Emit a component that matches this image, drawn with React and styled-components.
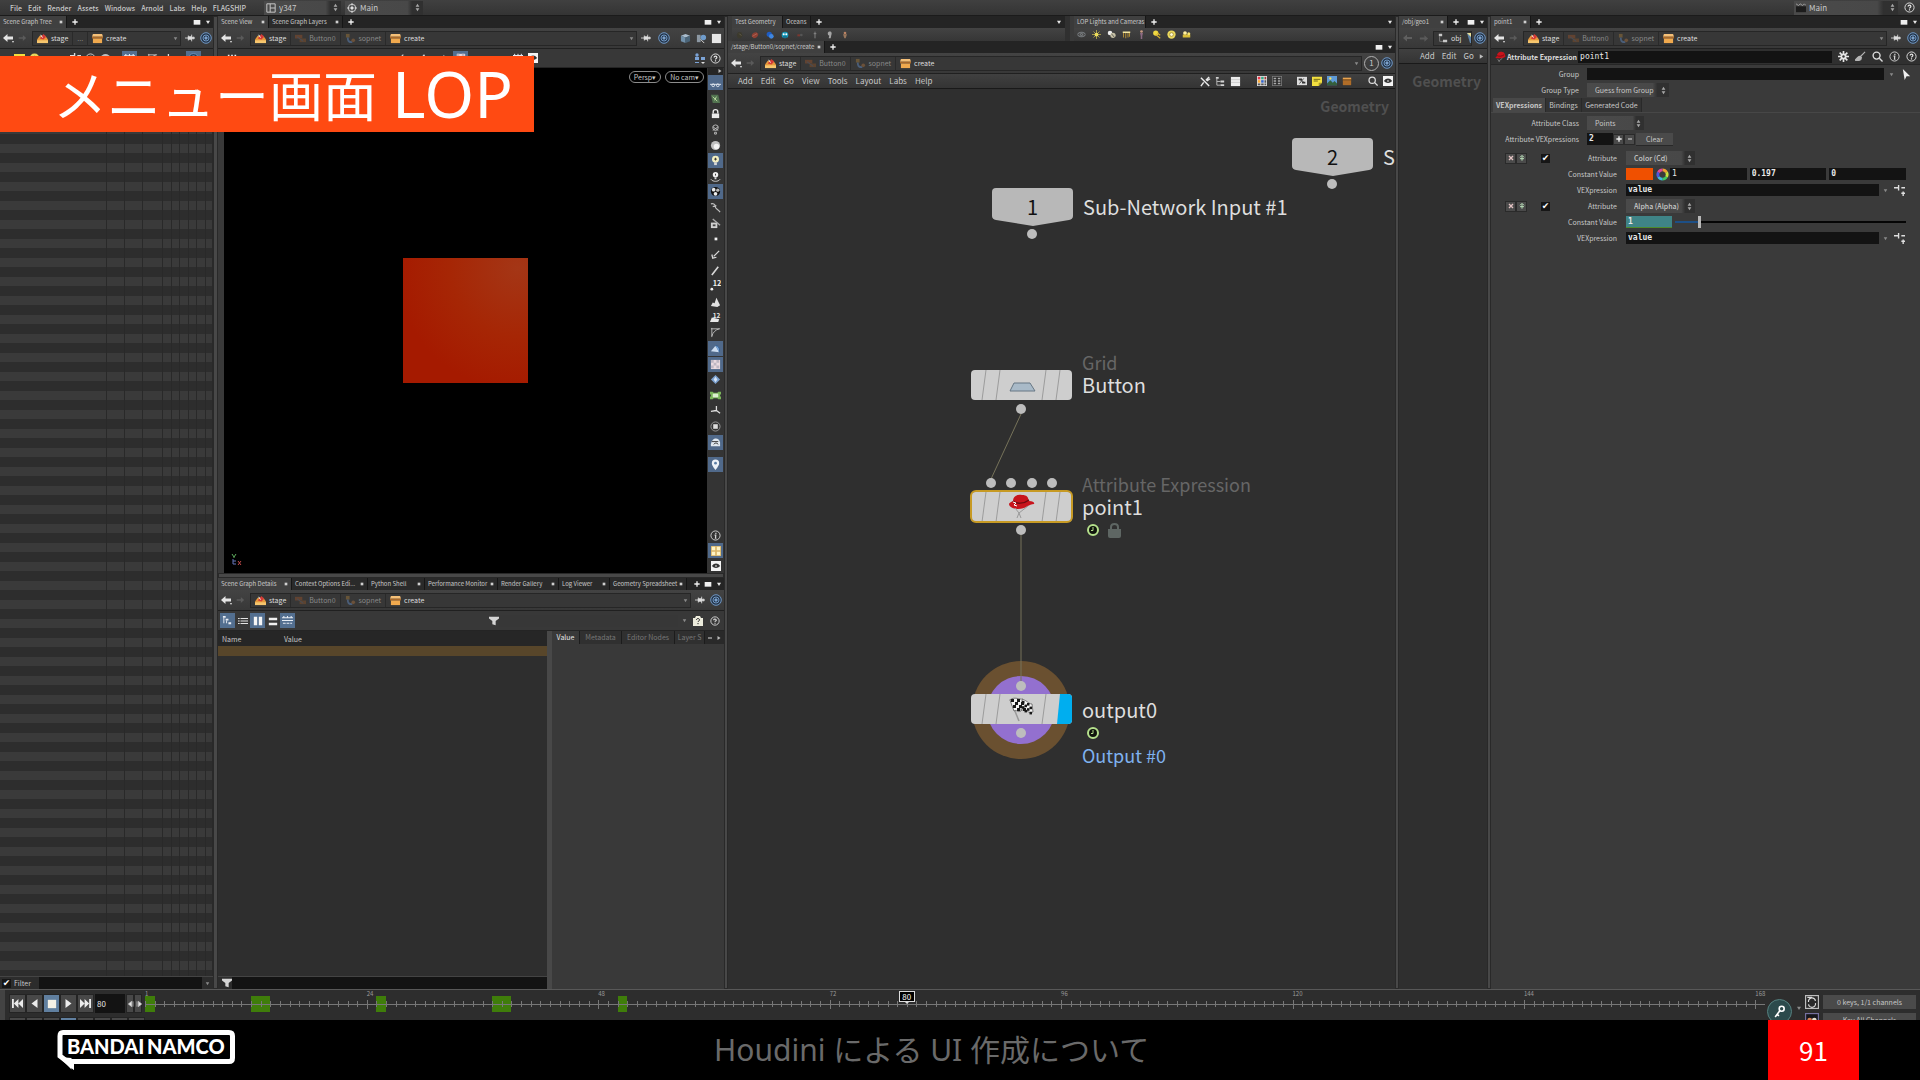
import React, { useState } from 'react'
import styled, { createGlobalStyle, css } from 'styled-components'

const UI = '"Noto Sans CJK JP", "Noto Sans", sans-serif'
const MONO = '"DejaVu Sans Mono", "Liberation Mono", monospace'

const ICONS = {
    back: <path d="M1 6 5.500 2v2.500H11v3H5.500V10zM10 9l2 0-1 2z" fill="#e4e4e4" />,
    forward: <path d="M11 6 7 2.500V5H2v2h5v2.500z" fill="#5a5a5a" />,
    backDim: <path d="M1 6 5 2.500V5h5v2H5v2.500z" fill="#5f5f5f" />,
    plus: <path d="M5 2h2v3h3v2H7v3H5V7H2V5h3z" fill="#f0f0f0" />,
    minus: <path d="M2 5h8v2H2z" fill="#dcdcdc" />,
    close: <path d="M4 4h4v4H4z" fill="#cfcfcf" />,
    cross: <path d="M3 3l6 6M9 3l-6 6" stroke="#e3c3c3" strokeWidth="2" />,
    insert: <path d="M3 5l3-3 3 3M6 3v7M3 7h6" stroke="#b9dfb9" strokeWidth="1.500" fill="none" />,
    pane: <path d="M1 3h10v7H1z" fill="#f0f0f0" />,
    down: <path d="M3 4h6L6 9z" fill="#e8e8e8" />,
    downDim: <path d="M3 4h6L6 9z" fill="#8a8a8a" />,
    right: <path d="M3 2l6 4-6 4z" fill="#bdbdbd" />,
    updown: <path d="M3.500 5 6 1l2.500 4zM3.500 7 6 11l2.500-4z" fill="#a8a8a8" />,
    stage: <g><path d="M0 7l3-4h6l3 4v4H0z" fill="#e79a3c" /><path d="M0 8h12v3H0z" fill="#f6c66e" /><path d="M3 6l4-5 3 3-3 3z" fill="#d33a36" /><path d="M4 2l2 3" stroke="#fff" /></g>,
    buttonNet: <g opacity="0.5"><path d="M0 2h8v4H0z" fill="#8d4f2c" /><path d="M5 6h7v4H5z" fill="#81502b" /><path d="M2 4l7 5" stroke="#4f6482" /></g>,
    sopnet: <g opacity="0.6"><path d="M1 1h4v4H1z" fill="#8a6a3a" /><path d="M3 5c0 4 1 5 5 5" stroke="#5778a5" strokeWidth="2" fill="none" /><circle cx="9" cy="8" r="2" fill="#8f633c" /></g>,
    create: <g><path d="M1 1h10l1 3H0z" fill="#f5c078" /><path d="M0 4h12v2H0z" fill="#a9692a" /><path d="M1 6h10v5H1z" fill="#f0a94e" /></g>,
    objnet: <g><path d="M1 1h4v3H1zM6 8h5v3H6z" fill="#c8c8c8" /><path d="M2 4v6h4" stroke="#888" fill="none" /></g>,
    objTool: <g><path d="M1 1h5l4 10H4z" fill="#5c82a8" /><path d="M1 1h4l2 6z" fill="#e8dd94" /></g>,
    pin: <path d="M0 6h4M4 3v6M4 4.500h4v3H4zM8 2v8M9 5h2v2H9z" stroke="#dedede" fill="#dedede" />,
    target: <g fill="none" stroke="#6f96c2"><circle cx="6" cy="6" r="5.300" fill="#26374c" /><circle cx="6" cy="6" r="3" /><circle cx="6" cy="6" r="1.200" fill="#9dbbe0" /></g>,
    help: <g fill="none" stroke="#e6e6e6"><circle cx="6" cy="6" r="5" /><path d="M4.500 5c0-2 3-2 3 0 0 1-1.500 1-1.500 2M6 8v1.200" strokeWidth="1.300" /></g>,
    info: <g fill="none" stroke="#d6d6d6"><circle cx="6" cy="6" r="5" /><path d="M5 5.500h1.300L6 9h1M6.400 3v1.300" strokeWidth="1.300" /></g>,
    cube: <g><path d="M1 3l5-2 5 2-5 2z" fill="#a9bccd" /><path d="M1 3l5 2v6L1 9z" fill="#7190aa" /><path d="M11 3L6 5v6l5-2z" fill="#4a6478" /></g>,
    capture: <g><path d="M1 2h4v8H1z" fill="#8c98a3" /><circle cx="8" cy="5" r="3" fill="#6f9ccc" /><path d="M5 7l4 4" stroke="#ddd" /></g>,
    square: <path d="M1 1h10v10H1z" fill="#e6e6e6" />,
    people: <g fill="#7ba3d6"><circle cx="3" cy="3" r="1.700" /><path d="M1 5h4v3H1zM1 10h4v1H1zM7 5h4v3H7z" /><path d="M7 10h4l-2 2z" fill="#ddd" /></g>,
    grid: <g fill="#eee"><path d="M1 2h2v2H1zM5 2h2v2H5zM9 2h2v2H9zM1 6h2v2H1zM5 6h2v2H5zM9 6h2v2H9z" /></g>,
    lamp: <g><circle cx="6" cy="6" r="2.500" fill="#f8eb78" /><path d="M6 0v12M0 6h12M2 2l8 8M10 2l-8 8" stroke="#e8d64f" strokeWidth="0.800" /></g>,
    lampArea: <g><path d="M1 2h10v2H1z" fill="#f4e6a0" /><path d="M2 4v6M5 4v7M8 4v6M10 4v5" stroke="#d6a634" /></g>,
    lampPoint: <g><circle cx="4" cy="4" r="3" fill="#eee" /><circle cx="8" cy="7" r="3.500" fill="#c5c0a4" /><path d="M6 5l4 5" stroke="#444" /></g>,
    spot: <g><circle cx="5" cy="4" r="3.500" fill="#f0d942" /><path d="M5 6l6 5M7 4l4 3" stroke="#dcb52f" strokeWidth="1.500" /></g>,
    ring: <g><circle cx="6" cy="6" r="5.500" fill="#ead85c" /><circle cx="6" cy="6" r="2.500" fill="#fffbd8" stroke="#9a8330" /></g>,
    mover: <g><circle cx="4" cy="4" r="2.500" fill="#fff0a0" /><path d="M1 6h10v4H1z" fill="#d9bd37" /><circle cx="9" cy="5" r="2" fill="#f7e46f" /></g>,
    figure: <g><circle cx="6" cy="2" r="1.800" fill="#c99b83" /><path d="M4 4h4l-1 4v4H5V8z" fill="#8c6a82" /></g>,
    eyeShadow: <g fill="none" stroke="#8e9499"><path d="M0 6c3-4 9-4 12 0-3 4-9 4-12 0z" fill="#4b4b4b" /><circle cx="6" cy="6" r="1.500" /></g>,
    crag: <g><path d="M3 2h5l2 5-3 4H3L1 6z" fill="#3c3a2d" /><path d="M5 4l3 3" stroke="#77705b" /></g>,
    bolt: <g><path d="M1 8c0-4 3-6 7-6l3 2c0 4-3 7-7 7z" fill="#8d4033" /><path d="M2 8l7-4" stroke="#c0705f" /></g>,
    pig: <g><circle cx="5" cy="5" r="4" fill="#1e5cc4" /><circle cx="8" cy="8" r="3.500" fill="#3f86e0" /></g>,
    squab: <g><circle cx="6" cy="6" r="5" fill="#1798b8" /><circle cx="4" cy="5" r="1.500" fill="#fff" /><circle cx="8" cy="5" r="1.500" fill="#fff" /><path d="M3 9h6" stroke="#0c3350" /></g>,
    toy: <g><path d="M2 5h4v3H2z" fill="#7a3830" /><circle cx="8" cy="6" r="2" fill="#555" /></g>,
    mannequin: <path d="M6 1v10M4 4h4" stroke="#8b8b8b" strokeWidth="1.300" />,
    head: <path d="M4 1c5-1 5 3 4 5l-1 5H4l1-4c-3-1-3-5-1-6z" fill="#a5a5a5" />,
    tommy: <g><circle cx="6" cy="3" r="2" fill="#b98263" /><path d="M3 5h6l-2 6H5z" fill="#97765c" /></g>,
    tools: <path d="M1 2l9 9M10 1 7 4l1 1 3-2M4 7l-3 4" stroke="#e8e8e8" strokeWidth="1.600" fill="none" />,
    tree: <g fill="#d4d4d4"><path d="M1 1h3v2H1zM6 5h4v2H6zM6 9h4v2H6z" /><path d="M2 3v7h4M2 6h4" stroke="#bdbdbd" fill="none" /></g>,
    list: <g><path d="M1 1h10v10H1z" fill="#ededed" /><path d="M1 4h10M1 7h10" stroke="#b3b3b3" strokeWidth="0.600" /></g>,
    palette: <g><path d="M0 0h12v12H0z" fill="#ddd" /><path d="M1 1h3v3H1z" fill="#e34" /><path d="M5 1h3v3H5z" fill="#3a8" /><path d="M1 5h3v3H1z" fill="#fa3" /><path d="M9 1h2v3H9z" fill="#a33" /><path d="M5 5h3v3H5z" fill="#36c" /><path d="M1 9h3v2H1zM5 9h3v2H5zM9 5h2v3H9zM9 9h2v2H9z" fill="#555" /></g>,
    dots: <g><path d="M0 0h12v12H0z" fill="#777" /><path d="M1 1h10v10H1z" fill="#2a2a2a" /><path d="M2 2h3v2H2zM7 2h3v2H7zM2 5h3v2H2zM7 5h3v2H7zM2 8h3v2H2zM7 8h3v2H7z" fill="#aaa" /></g>,
    netbox: <g><path d="M0 1h12v10H0z" fill="#ddd" /><path d="M2 3h4v2H2zM6 7h4v2H6z" fill="#333" /><path d="M4 5l4 2M8 3l-5 6" stroke="#333" /></g>,
    note: <g><path d="M0 1h12v7l-4 4H0z" fill="#f2df3f" /><path d="M2 4h8M2 6h5" stroke="#5e5414" /><path d="M8 12V8h4z" fill="#a4942a" /></g>,
    image: <g><path d="M0 0h12v11H0z" fill="#5e9ad6" /><path d="M0 9l4-4 3 3 2-2 3 3v2H0z" fill="#345f3c" /><circle cx="4" cy="3" r="1.400" fill="#f4e25f" /></g>,
    box: <g><path d="M1 2h10v3H1z" fill="#e9a450" /><path d="M1 5h10v6H1z" fill="#b06d28" /><path d="M0 4h12v1H0z" fill="#6b4113" /></g>,
    search: <g fill="none" stroke="#dedede" strokeWidth="1.500"><circle cx="5" cy="5" r="3.800" /><path d="M8 8l3.500 3.500" /></g>,
    eye: <g><path d="M0 0h12v12H0z" fill="#f4f4f4" /><path d="M1 6c3-4 7-4 10 0-3 3-7 3-10 0z" fill="#333" /><circle cx="6" cy="6" r="1" fill="#fff" /></g>,
    gear: <g><path d="M6 0v12M0 6h12M1.800 1.800l8.400 8.400M10.200 1.800l-8.400 8.400" stroke="#e6e6e6" strokeWidth="1.800" /><circle cx="6" cy="6" r="3.200" fill="#e6e6e6" /><circle cx="6" cy="6" r="1.300" fill="#333" /></g>,
    brush: <path d="M11 1 6 6M6 6c-3-1-3 2-6 4 4 1 7 0 7-3z" stroke="#b5b5b5" strokeWidth="1.200" fill="#b5b5b5" />,
    pointer: <path d="M2 0l8 8H6L4 12z" fill="#f0f0f0" />,
    hat: <g><path d="M2 6C2 2 5 0 8 1c2 0 3 2 3 4 2 1-2 3-6 3S-1 7 2 6z" fill="#c8141c" /><path d="M2 5c2 1 6 1 8-1" stroke="#7b0a10" fill="none" /><path d="M3 9l2 3M8 8l-4 3" stroke="#aaa" strokeWidth="0.600" /></g>,
    layout: <path d="M1 1h10v10H1zM5 1v10M5 6h6" stroke="#c6c6c6" strokeWidth="1.200" fill="none" />,
    radial: <g fill="none" stroke="#e2e2e2"><circle cx="6" cy="6" r="4.500" /><circle cx="6" cy="6" r="1.500" fill="#e2e2e2" /><path d="M6 0v3M6 9v3M0 6h3M9 6h3" /></g>,
    board: <g><path d="M0 4h12v7H0z" fill="#1c1c1c" /><path d="M0 1l3 2 2-2 3 2 2-2 2 2" stroke="#aaa" fill="none" /></g>,
    funnel: <path d="M0 1h12v2L8 6v5l-4-1V6L0 3z" fill="#d5d5d5" />,
    nodesSmall: <g fill="#e9eef5"><path d="M1 1h3v2H1zM4 4h3v2H4zM7 8h3v2H7z" /><path d="M2 3v6M5 6v3" stroke="#e9eef5" /></g>,
    bullets: <path d="M0 3h2M0 6h2M0 9h2M3 3h9M3 6h9M3 9h9" stroke="#e3e3e3" strokeWidth="1.400" />,
    pauseBars: <path d="M1 1h4v10H1zM7 1h4v10H7z" fill="#f5f5f5" />,
    hbars: <path d="M1 2h10v3H1zM1 8h10v3H1z" fill="#f0f0f0" />,
    layers: <path d="M0 3h12M0 6h12M1 9h3M5 9h3M9 9h2M2 1v2M6 1v2M10 1v2" stroke="#e6ecf4" strokeWidth="1.200" />,
    camHelp: <g><path d="M1 3h2l1-2h4l1 2h2v8H1z" fill="#ecebdc" /><path d="M4.500 5c0-2 3-2 3 0 0 1-1.500 1-1.500 2M6 8v1.200" stroke="#222" fill="none" /></g>,
    glasses: <g fill="none" stroke="#e1e8f0"><path d="M0 8h12" /><circle cx="3.500" cy="9" r="1.500" /><circle cx="8.500" cy="9" r="1.500" /></g>,
    leaf: <g><path d="M1 2h8l2 9H3z" fill="#527350" /><path d="M3 4l5 5M7 4l-2 4" stroke="#bfe0a6" /></g>,
    lock: <g><path d="M2 6h8v5H2z" fill="#ececec" /><path d="M3.500 6V4c0-3 5-3 5 0v2" stroke="#ececec" strokeWidth="1.500" fill="none" /></g>,
    bulbs: <g fill="none" stroke="#bdbdbd"><circle cx="6" cy="4" r="3" /><path d="M3 3l6 4M9 3L3 7M5 9h2v2H5z" /></g>,
    sphere: <g><circle cx="6" cy="6" r="5" fill="#bfbfbf" /><circle cx="7" cy="7" r="3" fill="#f3f3f3" /></g>,
    bulb: <g><circle cx="6" cy="4.500" r="3.800" fill="#f4efc1" /><path d="M4.500 8h3v3h-3z" fill="#d9d9d9" /><path d="M6 3v3M4.500 4.500h3" stroke="#333" /></g>,
    bulbFloor: <g><circle cx="6" cy="4" r="3" fill="#f2f2f2" /><path d="M5 7h2v2H5z" fill="#d9d9d9" /><path d="M6 3v2" stroke="#333" /><path d="M1 9c2 3 8 3 10 0" stroke="#d9d9d9" fill="none" /></g>,
    pano: <g><circle cx="6" cy="6" r="5" fill="#111" /><circle cx="4" cy="4" r="2" fill="#e8e8e8" /><circle cx="8.500" cy="4.500" r="1.800" fill="#bbb" /><circle cx="6" cy="8.500" r="2" fill="#eee" /></g>,
    hook: <path d="M1 2c5-1 5 3 5 4s3 2 5 5M3 5l4-1" stroke="#bebebe" strokeWidth="1.300" fill="none" />,
    camBox: <g><path d="M1 5h7v6H1z" fill="#d0d0d0" /><path d="M3 1l8 7" stroke="#a9a9a9" strokeWidth="1.500" /><path d="M3 7h3v2H3z" fill="#444" /></g>,
    point: <path d="M5 5h3v3H5z" fill="#f2f2f2" />,
    normal: <path d="M10 2 4 8M2 6l1 4 4-1" stroke="#d8d8d8" strokeWidth="1.400" fill="none" />,
    line: <path d="M2 11l3-4M5 7l4-5" stroke="#d8d8d8" strokeWidth="1.800" />,
    num: <g fill="#f0f0f0"><circle cx="2" cy="10" r="1.500" /><text x="3" y="7" fontSize="8" fontWeight="700">12</text></g>,
    prims: <path d="M1 11l2-4 2 1 2-6 4 8-3 2z" fill="#e2e2e2" />,
    primNum: <g fill="#e8e8e8"><path d="M0 11l2-5 8 2-1 3z" /><text x="3" y="6" fontSize="7" fontWeight="700">12</text></g>,
    curve: <path d="M2 1v10M1 2h10M2 10c1-4 4-7 8-8" stroke="#bdbdbd" fill="none" />,
    shade: <g><path d="M1 9l5-6 4 7z" fill="#cbdcf0" /><path d="M6 3c4 0 5 4 4 7" stroke="#2f5d94" fill="#7ba7da" /></g>,
    checker: <g><path d="M1 1h10v10H1z" fill="#e8d9df" /><path d="M1 1h3v3H1zM7 1h3v3H7zM4 4h3v3H4zM1 7h3v3H1zM7 7h3v3H7z" fill="#bcb6c2" /></g>,
    diamond: <g><path d="M6 1l5 5-5 5-5-5z" fill="#7aa0cf" /><path d="M6 3l2 3-2 3-2-3z" fill="#d6e4f5" /></g>,
    robot: <g><path d="M0 2h3l1 1h4l1-1h3v3H11v2h1v3H9L8 9H4l-1 1H0V7h1V5H0z" fill="#79b45a" /><path d="M3 4h6v4H3z" fill="#dcefd0" /></g>,
    axis: <path d="M7 6V1M7 6l4 3M7 6l-6 1" stroke="#dedede" strokeWidth="1.400" />,
    plate: <g><circle cx="6" cy="6" r="5" fill="none" stroke="#999" /><path d="M3.500 3.500h5v5h-5z" fill="#dcdcdc" /></g>,
    ghost: <g><path d="M1 8c1-8 9-8 10-2v4H1z" fill="#dfe7ef" /><path d="M2 5h7M4 8c2-2 3-2 5 0" stroke="#333" fill="none" /></g>,
    marker: <g><path d="M6 12C2 7 2 5 2 4.500a4 4 0 0 1 8 0C10 6 9 8 6 12z" fill="#eef2f7" /><circle cx="6" cy="4.500" r="1.500" fill="#5d7fa6" /></g>,
    quad: <g><path d="M0 0h12v12H0z" fill="#d9b568" /><path d="M1 1h4v4H1zM7 1h4v4H7zM1 7h4v4H1zM7 7h4v4H7z" fill="#fff3c4" /></g>,
    sliders: <path d="M0 3h5M5 0v6M8 3h4M8 9h4M10 7v5" stroke="#dedede" strokeWidth="1.500" />,
    first: <path d="M0 1h2v10H0zM7 1v10L2 6zM12 1v10L7 6z" fill="#ececec" />,
    prev: <path d="M10 0v12L2 6z" fill="#ececec" />,
    stop: <path d="M1 1h10v10H1z" fill="#f4f1e6" />,
    play: <path d="M2 0v12l8-6z" fill="#ececec" />,
    last: <path d="M10 1h2v10h-2zM5 1v10l5-5zM0 1v10l5-5z" fill="#ececec" />,
    stepL: <path d="M7 2v8L2 6zM9 2v8" stroke="#ccc" fill="#e6e6e6" />,
    stepR: <path d="M5 2v8l5-4zM3 2v8" stroke="#ccc" fill="#e6e6e6" />,
    key: <g fill="none" stroke="#fff" strokeWidth="1.500"><circle cx="8" cy="3.500" r="2.300" /><path d="M6.500 5 2 11M3.500 8.500l2 1.500" /></g>,
    refresh: <g><path d="M0 0h12v12H0z" fill="#bdbdbd" /><path d="M1 1h10v10H1z" fill="#2a2a2a" /><path d="M3 6a3 3 0 0 1 6-1M9 7a3 3 0 0 1-6 1M2 2h4" stroke="#ddd" fill="none" /></g>,
    keyBox: <g><path d="M0 0h12v12H0z" fill="#7671a0" /><path d="M1 1h10v10H1z" fill="#16161c" /><circle cx="4" cy="6" r="2" fill="#d97f54" /><circle cx="8" cy="6" r="2" fill="#e6e0ce" /></g>,
    wheel: (
        <g fill="none" strokeWidth="2.600">
            <path d="M6 1.700A4.300 4.300 0 0 1 9.700 3.900" stroke="#f0a030" /><path d="M9.700 3.900A4.300 4.300 0 0 1 9.700 8.200" stroke="#c8e040" />
            <path d="M9.700 8.200A4.300 4.300 0 0 1 6 10.300" stroke="#40c860" /><path d="M6 10.300A4.300 4.300 0 0 1 2.300 8.200" stroke="#3fb8e0" />
            <path d="M2.300 8.200A4.300 4.300 0 0 1 2.300 3.900" stroke="#5058e0" /><path d="M2.300 3.900A4.300 4.300 0 0 1 6 1.700" stroke="#e04898" />
        </g>
    ),
}

const Icon = ({ name, size = 12 }) => (
    <svg width={size} height={size} viewBox="0 0 12 12" aria-hidden="true">{ICONS[name]}</svg>
)

const IconButton = ({ icon, label, size, ...rest }) => (
    <ToolButton type="button" aria-label={label || icon} {...rest}><Icon name={icon} size={size} /></ToolButton>
)

const PaneTabs = ({ tabs, menu = true, square = true, plusLast }) => (
    <TabBar>
        {tabs.map((t, i) => (
            <Tab key={t.name} $w={t.w} $active={i === 0}>
                <TabName type="button">{t.name}</TabName>
                {t.close !== false && <IconButton icon="close" label={`Close ${t.name}`} size={8} $w={8} />}
            </Tab>
        ))}
        {!plusLast && <IconButton icon="plus" label="New tab" size={8} $w={16} />}
        <Spacer />
        {plusLast && <IconButton icon="plus" label="New tab" size={8} $w={11} />}
        {square && <IconButton icon="pane" label="Maximise pane" size={8} $w={11} />}
        {menu && <IconButton icon="down" label="Pane menu" size={8} $w={11} />}
    </TabBar>
)

const CRUMBS = [
    { icon: 'stage', name: 'stage' },
    { icon: 'buttonNet', name: 'Button0', dim: true },
    { icon: 'sopnet', name: 'sopnet', dim: true },
    { icon: 'create', name: 'create' },
]

const PathBar = ({ crumbs = CRUMBS, children }) => (
    <PathRow>
        <IconButton icon="back" label="Back" $w={14} />
        <IconButton icon="forward" label="Forward" size={10} $w={14} />
        <Crumbs>
            {crumbs.map((c) => (
                <Crumb key={c.name} href="#" $dim={c.dim}>
                    {c.icon && <Icon name={c.icon} size={11} />}
                    {c.name}
                </Crumb>
            ))}
            <Spacer />
            <IconButton icon="downDim" label="Path history" size={7} $w={9} />
        </Crumbs>
        {children}
    </PathRow>
)

const Picker = ({ icon, label, value, $w, id, bold }) => (
    <PickerBox $w={$w}>
        {icon && <Icon name={icon} size={10} />}
        <PickerSelect id={id} aria-label={label} $bold={bold} $icon={!!icon}><option>{value}</option></PickerSelect>
        <Icon name="updown" size={9} />
    </PickerBox>
)

const TREE_TOOLS = [
    ['note', 10], ['ring', 0], ['toy', 3], ['sliders', 8], ['info', 0], ['sphere', 0],
    ['layers', 9, true], ['curve', 8], ['axis', 0], ['target', 11, true],
]

const SIDE_TOOLS = [
    ['glasses', 1], ['leaf'], ['lock'], ['bulbs'], ['sphere'], ['bulb', 1], ['bulbFloor'], ['pano', 1], ['hook'],
    ['camBox'], ['point'], ['normal'], ['line'], ['num'], ['prims'], ['primNum'], ['curve'], ['shade', 1],
    ['checker', 1], ['diamond'], ['robot'], ['axis'], ['plate'], ['ghost', 1],
]

const SceneTree = () => (
    <Pane>
        <PaneTabs tabs={[{ name: 'Scene Graph Tree', w: 67 }]} />
        <PathBar crumbs={[CRUMBS[0], { name: '...', dim: true }, CRUMBS[3]]}>
            <IconButton icon="pin" $w={18} size={10} />
            <IconButton icon="target" $w={14} />
        </PathBar>
        <ToolRow $h={19}>
            {TREE_TOOLS.map(([icon, gap, on]) => (
                <React.Fragment key={icon}>
                    {gap > 0 && <Gap $w={gap} />}
                    <IconButton icon={icon} $w={15} size={11} $on={on} />
                </React.Fragment>
            ))}
        </ToolRow>
        <TreeBody>{Array.from({ length: 10 }, (_, i) => <i key={i} />)}</TreeBody>
        <FilterBar>
            <Check id="filter-on" type="checkbox" defaultChecked />
            <FilterLabel htmlFor="filter-on">Filter</FilterLabel>
            <Field aria-label="Filter text" />
            <IconButton icon="downDim" label="Filter history" size={7} $w={11} />
        </FilterBar>
    </Pane>
)

const SceneView = () => (
    <Pane>
        <PaneTabs tabs={[{ name: 'Scene View', w: 51 }, { name: 'Scene Graph Layers', w: 74 }]} />
        <PathBar>
            <IconButton icon="pin" $w={18} size={10} />
            <IconButton icon="target" $w={17} />
            <Gap $w={5} />
            <IconButton icon="cube" $w={17} size={11} />
            <IconButton icon="capture" $w={15} size={11} />
            <IconButton icon="square" $w={15} size={11} />
        </PathBar>
        <ToolRow $h={19}>
            <IconButton icon="grid" $w={24} size={10} />
            <Spacer />
            <IconButton icon="normal" $w={20} size={10} />
            <IconButton icon="line" $w={23} size={10} />
            <IconButton icon="prims" $w={20} size={10} />
            <IconButton icon="checker" $w={15} size={10} $on />
            <IconButton icon="minus" $w={18} size={10} />
            <Gap $w={24} />
            <IconButton icon="layers" $w={15} size={10} />
            <IconButton icon="eye" $w={15} size={10} />
            <Gap $w={152} />
            <IconButton icon="people" $w={15} />
            <IconButton icon="help" $w={17} size={11} />
        </ToolRow>
        <ViewRow>
            <Viewport>
                <Quad />
                <CameraMenus>
                    <Pill type="button">Persp▾</Pill>
                    <Pill type="button">No cam▾</Pill>
                </CameraMenus>
                <AxisMark width="14" height="14" viewBox="0 0 14 14" aria-hidden="true">
                    <path d="M2 1l2 3 2-3M4 4v1" stroke="#5fae5f" fill="none" />
                    <path d="M3 6v5M3 8h3M3 11h3" stroke="#6677bb" fill="none" />
                    <path d="M8 8l3 4M11 8l-3 4" stroke="#c14a4a" fill="none" />
                </AxisMark>
            </Viewport>
            <SideBar>
                <SideHead type="button" aria-label="Collapse toolbar"><Icon name="right" size={6} /></SideHead>
                <SideTools>
                    {SIDE_TOOLS.map(([icon, on]) => <SideButton key={icon} type="button" aria-label={icon} $on={on}><Icon name={icon} size={11} /></SideButton>)}
                </SideTools>
                <Gap $h={7} />
                <SideButton type="button" aria-label="Markers" $on><Icon name="marker" size={11} /></SideButton>
                <Spacer />
                <SideButton type="button" aria-label="Info"><Icon name="info" size={11} /></SideButton>
                <SideButton type="button" aria-label="Quad view" $on><Icon name="quad" size={10} /></SideButton>
                <SideButton type="button" aria-label="Display options"><Icon name="eye" size={10} /></SideButton>
            </SideBar>
        </ViewRow>
    </Pane>
)

const DETAIL_TABS = [
    { name: 'Scene Graph Details', w: 74 }, { name: 'Context Options Edi...', w: 76 }, { name: 'Python Shell', w: 57 },
    { name: 'Performance Monitor', w: 73 }, { name: 'Render Gallery', w: 61 }, { name: 'Log Viewer', w: 51 },
    { name: 'Geometry Spreadsheet', w: 76 },
]

const Details = () => (
    <Pane>
        <PaneTabs tabs={DETAIL_TABS} plusLast />
        <PathBar>
            <IconButton icon="pin" $w={17} size={10} />
            <IconButton icon="target" $w={16} />
        </PathBar>
        <ToolRow $h={20}>
            <IconButton icon="nodesSmall" $w={15} size={11} $on />
            <IconButton icon="bullets" $w={15} size={10} />
            <IconButton icon="pauseBars" $w={15} size={10} $on />
            <IconButton icon="hbars" $w={15} size={10} />
            <IconButton icon="layers" $w={15} size={11} $on />
            <Spacer />
            <Icon name="funnel" size={10} />
            <PlainField aria-label="Filter details" />
            <IconButton icon="downDim" label="Filter history" size={7} $w={12} />
            <IconButton icon="camHelp" $w={15} />
            <IconButton icon="help" $w={19} size={10} />
        </ToolRow>
        <DetailBody>
            <DetailTree>
                <Table>
                    <thead><tr><th>Name</th><th>Value</th></tr></thead>
                    <tbody><tr><td /><td /></tr></tbody>
                </Table>
                <Spacer />
                <FilterBar>
                    <Gap $w={2} />
                    <Icon name="funnel" size={10} />
                    <Field aria-label="Filter names" />
                </FilterBar>
            </DetailTree>
            <DetailInfo>
                <InfoTabs>
                    <InfoTab type="button" $active $w={28}>Value</InfoTab>
                    <InfoTab type="button" $w={42}>Metadata</InfoTab>
                    <InfoTab type="button" $w={53}>Editor Nodes</InfoTab>
                    <InfoTab type="button" $w={30}>Layer S</InfoTab>
                    <IconButton icon="minus" label="Previous tabs" size={6} $w={9} />
                    <IconButton icon="right" label="Next tabs" size={6} $w={9} />
                </InfoTabs>
            </DetailInfo>
        </DetailBody>
    </Pane>
)

const NodeStripes = ({ x, y, blue }) => (
    <g>
        <rect x={x} y={y} width="101" height="30" rx="4" fill="#cecece" />
        {blue && <path d={`M${x + 89} ${y}h8a4 4 0 0 1 4 4v22a4 4 0 0 1-4 4h-11z`} fill="#00aeef" />}
        <g stroke="#9c9c9c">
            <path d={`M${x + 15} ${y}l-4 30M${x + 29} ${y}l-4 30M${x + 75} ${y}l-4 30`} />
            {!blue && <path d={`M${x + 89} ${y}l-4 30`} />}
        </g>
    </g>
)

const Port = ({ x, y }) => <circle cx={x} cy={y} r="5" fill="#bdbdbd" />

const InputShape = ({ x, y }) => (
    <g>
        <path d={`M${x + 4} ${y}h73a4 4 0 0 1 4 4v24q0 3-4 4l-36 6-37-6q-4-1-4-4V${y + 4}a4 4 0 0 1 4-4z`} fill="#b8b8b8" />
        <Port x={x + 40} y={y + 46} />
    </g>
)

const Clock = () => (
    <svg width="14" height="14" viewBox="0 0 14 14" aria-hidden="true">
        <circle cx="7" cy="7" r="5" fill="#10150d" stroke="#b5e08c" strokeWidth="2" />
        <path d="M7 4v3.500H5" stroke="#b5e08c" fill="none" />
    </svg>
)

const FLAG = [[0, 0], [2, 0], [1, 1], [3, 1], [0, 2], [2, 2], [1, 3], [3, 3]]

const Network = () => (
    <Canvas>
        <Wires aria-hidden="true">
            <circle cx="293" cy="621" r="49" fill="#6a5030" />
            <circle cx="293" cy="621" r="34" fill="#9370cf" />
            <path d="M293 325 263 390M293 446v146" stroke="#76735a" />
            <InputShape x={264} y={99} />
            <InputShape x={564} y={49} />
            <NodeStripes x={243} y={281} />
            <path d="M286 294h16l5 8h-25z" fill="#a9bac8" stroke="#667784" />
            <Port x={293} y={320} />
            {[263, 283, 304, 324].map((x) => <Port key={x} x={x} y={394} />)}
            <NodeStripes x={243} y={403} />
            <rect x="243" y="402" width="101" height="31" rx="5" fill="none" stroke="#c79a24" strokeWidth="2" />
            <g>
                <path d="M285 412c0-5 4-7 9-6 5 0 6 2 7 6 4 0 6 2 5 3-5 0-8 5-16 5-6 0-9-3-9-5 0-1 2-2 4-3z" fill="#c8141c" />
                <path d="M285 412c3 3 11 3 16-1" stroke="#6f0a10" strokeWidth="1.500" fill="none" />
                <path d="M285 413l3 1-2 2 3 1" stroke="#fff" fill="none" />
                <path d="M287 419l4 5 9-7M291 424l-2 5M291 424l2 5" stroke="#999" fill="none" />
            </g>
            <Port x={293} y={441} />
            <NodeStripes x={243} y={605} blue />
            <g transform="translate(281 608)">
                <path d="M1 2l9 22" stroke="#999" strokeWidth="1.500" />
                <path d="M1 3C6-1 10 3 14 2l-2 12c-4 2-4-2-7 0z" fill="#f5f5f5" stroke="#333" strokeWidth="0.600" />
                <path d="M13 3c4-1 6 4 10 4l1 8c-5 2-6-3-12-2z" fill="#f5f5f5" stroke="#333" strokeWidth="0.600" />
                {FLAG.map(([a, b]) => <rect key={`${a}${b}`} x={2 + a * 3 + b} y={2 + b * 3} width="3" height="3" fill="#181818" />)}
                {FLAG.map(([a, b]) => <rect key={`r${a}${b}`} x={13 + a * 2.5} y={4 + b * 2.6 + a} width="2.500" height="2.600" fill="#181818" />)}
            </g>
            <Port x={293} y={597} />
            <Port x={293} y={644} />
        </Wires>
        <CanvasTitle>Geometry</CanvasTitle>
        <NodeNumber $x={264} $y={107}>1</NodeNumber>
        <NodeNumber $x={564} $y={57}>2</NodeNumber>
        <NodeText $x={355} $y={107}>Sub-Network Input #1</NodeText>
        <NodeText $x={655} $y={57}>Sub-Network Input #2</NodeText>
        <NodeText $x={354} $y={263}><Kind>Grid</Kind>Button</NodeText>
        <NodeText $x={354} $y={385}>
            <Kind>Attribute Expression</Kind>point1
            <Badges>
                <Clock />
                <svg width="13" height="15" viewBox="0 0 13 15" aria-hidden="true">
                    <path d="M0 6h13v7q0 2-2 2H2q-2 0-2-2z" fill="#5e6663" />
                    <path d="M3 6V4c0-4 7-4 7 0v2" stroke="#5e6663" strokeWidth="2" fill="none" />
                </svg>
            </Badges>
        </NodeText>
        <NodeText $x={354} $y={610}>output0<Badges><Clock /></Badges><OutputNote>Output #0</OutputNote></NodeText>
    </Canvas>
)

const NET_MENU = ['Add', 'Edit', 'Go', 'View', 'Tools', 'Layout', 'Labs', 'Help']

const NetworkPane = () => (
    <Pane>
        <Shelves>
            <Shelf $grow={337}>
                <PaneTabs square={false} tabs={[{ name: 'Test Geometry', w: 51, close: false }, { name: 'Oceans', w: 28, close: false }]} />
                <ShelfTools>
                    {['crag', 'bolt', 'pig', 'squab', 'toy', 'mannequin', 'head', 'tommy'].map((n) => <IconButton key={n} icon={n} $w={15} size={8} />)}
                </ShelfTools>
            </Shelf>
            <Shelf $grow={325}>
                <PaneTabs square={false} tabs={[{ name: 'LOP Lights and Cameras', w: 66, close: false }]} />
                <ShelfTools>
                    {['eyeShadow', 'lamp', 'lampPoint', 'lampArea', 'figure', 'spot', 'ring', 'mover'].map((n) => <IconButton key={n} icon={n} $w={15} size={9} />)}
                </ShelfTools>
            </Shelf>
        </Shelves>
        <PaneTabs tabs={[{ name: '/stage/Button0/sopnet/create', w: 97 }]} />
        <PathBar>
            <Gap $w={2} />
            <LinkNumber type="button">1</LinkNumber>
            <IconButton icon="target" $w={16} />
        </PathBar>
        <MenuRow>
            {NET_MENU.map((m) => <MenuItem key={m} type="button">{m}</MenuItem>)}
            <Spacer />
            {['tools', 'tree', 'list'].map((n) => <IconButton key={n} icon={n} $w={15} size={11} />)}
            <Gap $w={11} />
            {['palette', 'dots'].map((n) => <IconButton key={n} icon={n} $w={15} size={10} />)}
            <Gap $w={10} />
            {['netbox', 'note', 'image', 'box'].map((n) => <IconButton key={n} icon={n} $w={15} size={10} />)}
            <Gap $w={11} />
            {['search', 'eye'].map((n) => <IconButton key={n} icon={n} $w={15} size={10} />)}
        </MenuRow>
        <Network />
    </Pane>
)

const ObjPane = () => (
    <Pane>
        <PaneTabs tabs={[{ name: '/obj/geo1', w: 49 }]} />
        <PathRow>
            <IconButton icon="backDim" label="Back" $w={16} />
            <IconButton icon="forward" label="Forward" size={11} $w={14} />
            <Crumbs>
                <Crumb href="#"><Icon name="objnet" size={10} />obj</Crumb>
                <Spacer />
                <Icon name="objTool" size={12} />
            </Crumbs>
            <IconButton icon="target" $w={15} />
        </PathRow>
        <MenuRow $pad={17}>
            {['Add', 'Edit', 'Go'].map((m) => <MenuItem key={m} type="button">{m}</MenuItem>)}
            <Spacer />
            <IconButton icon="right" label="More menus" size={7} $w={10} />
        </MenuRow>
        <Canvas><CanvasTitle>Geometry</CanvasTitle></Canvas>
    </Pane>
)

const ExpressionBlock = ({ n, attribute, children }) => (
    <>
        <MultiRow>
            <MultiHead>
                <MiniButton type="button" aria-label={`Remove expression ${n}`}><Icon name="cross" size={8} /></MiniButton>
                <MiniButton type="button" aria-label={`Insert before expression ${n}`}><Icon name="insert" size={8} /></MiniButton>
                <Gap $w={14} />
                <Check type="checkbox" defaultChecked aria-label={`Enable expression ${n}`} />
                <Spacer />
                <label htmlFor={`attr-${n}`}>Attribute</label>
            </MultiHead>
            <Picker id={`attr-${n}`} value={attribute} $w={69} bold />
        </MultiRow>
        <MultiRow>
            <MultiHead><Spacer /><label htmlFor={`const-${n}`}>Constant Value</label></MultiHead>
            <Controls $end={14}>{children}</Controls>
        </MultiRow>
        <MultiRow>
            <MultiHead><Spacer /><label htmlFor={`vex-${n}`}>VEXpression</label></MultiHead>
            <Controls $end={14}>
                <Field id={`vex-${n}`} defaultValue="value" $bold />
                <IconButton icon="downDim" label="Expression presets" size={7} $w={13} />
                <IconButton icon="sliders" label="Create parameters" size={11} $w={14} />
            </Controls>
        </MultiRow>
    </>
)

const ParamPane = () => {
    const [alpha, setAlpha] = useState(1)
    return (
        <ParamBox>
            <PaneTabs tabs={[{ name: 'point1', w: 40 }]} />
            <PathBar>
                <IconButton icon="pin" $w={18} size={10} />
                <IconButton icon="target" $w={15} />
            </PathBar>
            <TitleRow>
                <Icon name="hat" size={11} />
                <TitleLabel htmlFor="node-name">Attribute Expression</TitleLabel>
                <Field id="node-name" defaultValue="point1" />
                <Gap $w={3} />
                {['gear', 'brush', 'search', 'info', 'help'].map((n) => <IconButton key={n} icon={n} $w={17} size={11} />)}
            </TitleRow>
            <ParamRow>
                <label htmlFor="group">Group</label>
                <Controls>
                    <Field id="group" />
                    <IconButton icon="downDim" label="Group presets" size={7} $w={14} />
                    <IconButton icon="pointer" label="Select group" size={11} $w={16} />
                </Controls>
            </ParamRow>
            <ParamRow>
                <label htmlFor="group-type">Group Type</label>
                <Picker id="group-type" value="Guess from Group" $w={82} />
            </ParamRow>
            <FolderTabs>
                <FolderTab type="button" $active $w={53}>VEXpressions</FolderTab>
                <FolderTab type="button" $w={36}>Bindings</FolderTab>
                <FolderTab type="button" $w={60}>Generated Code</FolderTab>
            </FolderTabs>
            <ParamRow>
                <label htmlFor="attr-class">Attribute Class</label>
                <Picker id="attr-class" value="Points" $w={57} />
            </ParamRow>
            <ParamRow>
                <label htmlFor="vex-count">Attribute VEXpressions</label>
                <Controls>
                    <CountField id="vex-count" defaultValue="2" $bold />
                    <MiniButton type="button" aria-label="Add expression"><Icon name="plus" size={8} /></MiniButton>
                    <MiniButton type="button" aria-label="Remove last expression"><Icon name="minus" size={6} /></MiniButton>
                    <ClearButton type="button">Clear</ClearButton>
                </Controls>
            </ParamRow>
            <Gap $h={3} />
            <ExpressionBlock n={1} attribute="Color (Cd)">
                <Swatch type="button" aria-label="Constant colour" />
                <IconButton icon="wheel" label="Colour wheel" size={13} $w={16} />
                <Triple>
                    <Field id="const-1" defaultValue="1" />
                    <Field aria-label="Green" defaultValue="0.197" $bold />
                    <Field aria-label="Blue" defaultValue="0" $bold />
                </Triple>
            </ExpressionBlock>
            <ExpressionBlock n={2} attribute="Alpha (Alpha)">
                <KeyedField id="const-2" value={alpha} onChange={(e) => setAlpha(e.target.value)} $bold />
                <Slider type="range" aria-label="Constant value slider" min="0" max="10" value={alpha} onChange={(e) => setAlpha(e.target.value)} />
            </ExpressionBlock>
        </ParamBox>
    )
}

const KEYS = [1, 12, 13, 25, 37, 38, 50]
const FRAMES = Array.from({ length: 168 }, (_, i) => i + 1)

const Timeline = () => (
    <TimelineBar>
        <Transport>
            <TransportRow>
                <PlayButton type="button" aria-label="First frame"><Icon name="first" size={11} /></PlayButton>
                <PlayButton type="button" aria-label="Play backwards"><Icon name="prev" size={9} /></PlayButton>
                <PlayButton type="button" aria-label="Stop" $on><Icon name="stop" size={10} /></PlayButton>
                <PlayButton type="button" aria-label="Play"><Icon name="play" size={9} /></PlayButton>
                <PlayButton type="button" aria-label="Last frame"><Icon name="last" size={11} /></PlayButton>
                <FrameField aria-label="Current frame" defaultValue="80" />
                <PlayButton type="button" aria-label="Previous frame" $w={8}><Icon name="stepL" size={8} /></PlayButton>
                <PlayButton type="button" aria-label="Next frame" $w={8}><Icon name="stepR" size={8} /></PlayButton>
            </TransportRow>
            <TransportRow>
                {['pane', 'hook', 'bulbs', 'help', 'curve', 'line', 'axis', 'dots'].map((n) => (
                    <PlayButton key={n} type="button" aria-label={n} $on={n === 'help'}><Icon name={n} size={10} /></PlayButton>
                ))}
            </TransportRow>
        </Transport>
        <Frames>
            {FRAMES.map((f) => (
                <Frame key={f} $major={f % 24 === 0} $keyed={KEYS.includes(f)}>
                    {(f === 1 || f % 24 === 0) && <FrameLabel>{f}</FrameLabel>}
                    {f === 80 && <Playhead>80</Playhead>}
                </Frame>
            ))}
        </Frames>
        <KeyTools>
            <KeyButton type="button" aria-label="Set key"><Icon name="key" size={13} /></KeyButton>
            <IconButton icon="downDim" label="Key menu" size={8} $w={13} />
            <KeyRows>
                <KeyRow><Icon name="refresh" size={14} /><ChannelButton type="button">0 keys, 1/1 channels</ChannelButton></KeyRow>
                <KeyRow><Icon name="keyBox" size={14} /><ChannelButton type="button">Key All Channels</ChannelButton></KeyRow>
            </KeyRows>
        </KeyTools>
    </TimelineBar>
)

const MAIN_MENU = ['File', 'Edit', 'Render', 'Assets', 'Windows', 'Arnold', 'Labs', 'Help', 'FLAGSHIP']

const App = () => (
    <Slide>
        <Global />
        <TopBar>
            <MainMenu>
                {MAIN_MENU.map((m) => <MenuItem key={m} type="button" $main>{m}</MenuItem>)}
            </MainMenu>
            <Picker icon="layout" label="Desktop" value="y347" $w={77} />
            <Gap $w={4} />
            <Picker icon="radial" label="Radial menu" value="Main" $w={78} />
            <Spacer />
            <Picker icon="board" label="Take" value="Main" $w={104} />
            <IconButton icon="help" $w={22} size={11} />
        </TopBar>
        <Workspace>
            <SceneTree />
            <Split />
            <MiddleColumn>
                <SceneView />
                <Split />
                <Details />
            </MiddleColumn>
            <Split />
            <NetworkPane />
            <Split />
            <ObjPane />
            <Split />
            <ParamPane />
        </Workspace>
        <Timeline />
        <Banner>メニュー画面 <BannerLatin>LOP</BannerLatin></Banner>
        <Footer>
            <Logo viewBox="0 0 178 40" role="img" aria-label="Bandai Namco">
                <path d="M6 2.500h166q3.500 0 3.500 3.500v22q0 3.500-3.500 3.500H14.500V35L3 26V6q0-3.500 3-3.500z" fill="none" stroke="#fff" strokeWidth="5" />
                <path d="M2 27l12.500 12.500V28z" fill="#fff" />
                <text x="10" y="24">BANDAI</text>
                <text x="90" y="24">NAMCO</text>
            </Logo>
            <FooterTitle>Houdini による UI 作成について</FooterTitle>
            <PageNumber>91</PageNumber>
        </Footer>
    </Slide>
)

export default App

const Global = createGlobalStyle`
    * { box-sizing: border-box; }
    body {
        margin: 0;
        background: #000;
        color: #c8c8c8;
        font: 8px/12px ${UI};
    }
    button, input, select {
        font: inherit;
        color: inherit;
        margin: 0;
        padding: 0;
        border: 0;
        border-radius: 0;
        background: none;
        min-width: 0;
    }
    svg { flex: none; display: block; }
`

const Slide = styled.main`
    position: relative;
    display: flex;
    flex-direction: column;
    min-height: 100vh;
    overflow: hidden;
`

const Spacer = styled.span`
    flex: 1;
`

const Gap = styled.span`
    flex: none;
    width: ${(p) => p.$w || 1}px;
    height: ${(p) => p.$h || 1}px;
`

const ToolButton = styled.button`
    display: flex;
    flex: none;
    align-items: center;
    justify-content: center;
    width: ${(p) => p.$w || 15}px;
    align-self: stretch;
    ${(p) => p.$on && css`
        background: #536f90;
        margin: 2px 0;
    `}
`

const TopBar = styled.header`
    display: flex;
    align-items: center;
    height: 16px;
    padding-left: 7px;
    background: linear-gradient(#404040, #343434);
    border-bottom: 1px solid #1b1b1b;
`

const MainMenu = styled.nav`
    display: flex;
    width: 257px;
`

const MenuItem = styled.button`
    padding: 0 ${(p) => (p.$main ? 3 : 4)}px;
    font-size: ${(p) => (p.$main ? 7 : 8)}px;
    font-weight: ${(p) => (p.$main ? 500 : 400)};
    line-height: 14px;
`

const PickerBox = styled.span`
    display: flex;
    align-items: center;
    width: ${(p) => p.$w}px;
    height: 14px;
    padding: 0 1px 0 2px;
    background: linear-gradient(to right, #4a4a4a, #484848 80%, #303030 86%);
`

const PickerSelect = styled.select`
    appearance: none;
    flex: 1;
    height: 14px;
    padding-left: ${(p) => (p.$icon ? 3 : 6)}px;
    font-size: ${(p) => (p.$icon ? 8 : 7)}px;
    font-weight: ${(p) => (p.$bold ? 500 : 400)};
    outline: none;
`

const Workspace = styled.div`
    flex: 1;
    display: grid;
    grid-template-columns:
        minmax(0, 213fr) 5px minmax(0, 506fr) 4px minmax(0, 667fr) 4px minmax(0, 88fr) 4px minmax(0, 429fr);
`

const Split = styled.div`
    background: #484848;
    border: 1px solid #292929;
`

const MiddleColumn = styled.div`
    display: grid;
    grid-template-rows: minmax(0, 557fr) 5px minmax(0, 411fr);
`

const Pane = styled.section`
    display: flex;
    flex-direction: column;
    min-width: 0;
    background: #393939;
`

const TabBar = styled.div`
    display: flex;
    flex: none;
    height: 12px;
    background: #242424;
`

const Tab = styled.div`
    display: flex;
    align-items: center;
    justify-content: space-between;
    min-width: ${(p) => p.$w}px;
    padding: 0 1px 0 3px;
    background: ${(p) => (p.$active ? '#404040' : '#2a2a2a')};
    border-right: 1px solid #161616;
`

const TabName = styled.button`
    font-size: 6px;
    line-height: 12px;
    white-space: nowrap;
`

const PathRow = styled.div`
    display: flex;
    flex: none;
    align-items: center;
    height: 21px;
    padding-left: 1px;
    background: linear-gradient(#434343, #383838);
    border-bottom: 1px solid #202020;
`

const Crumbs = styled.nav`
    display: flex;
    flex: 1;
    align-items: center;
    height: 15px;
    margin-left: 3px;
    border: 1px solid #262626;
    background: #373737;
    overflow: hidden;
`

const Crumb = styled.a`
    display: flex;
    align-items: center;
    gap: 3px;
    padding: 0 4px;
    font-size: 7px;
    line-height: 13px;
    text-decoration: none;
    color: ${(p) => (p.$dim ? '#888' : '#dedede')};
    border-right: 1px solid #2a2a2a;
    &:last-of-type { border-right: 0; }
`

const ToolRow = styled.div`
    display: flex;
    flex: none;
    align-items: center;
    height: ${(p) => p.$h}px;
    padding-left: 2px;
    background: #383838;
    border-bottom: 1px solid #242424;
`

const TreeBody = styled.div`
    flex: 1;
    display: grid;
    grid-template-columns: 107px 18px 18px 20px 9px 8px 9px 8px 9px 1fr;
    background: repeating-linear-gradient(#3a3a3a 0 9px, #2d2d2d 9px 19px);
    i { border-right: 1px solid #292929; }
`

const FilterBar = styled.div`
    display: flex;
    flex: none;
    align-items: center;
    height: 13px;
    padding-left: 2px;
    background: #2c2c2c;
    border-top: 1px solid #444;
`

const FilterLabel = styled.label`
    width: 28px;
    padding-left: 3px;
    font-size: 7px;
`

const Check = styled.input`
    appearance: none;
    flex: none;
    width: 9px;
    height: 9px;
    background: #161616;
    display: grid;
    place-items: center;
    &:checked::after {
        content: '✔';
        color: #fff;
        font: 9px/9px "DejaVu Sans", sans-serif;
    }
`

const Field = styled.input`
    flex: 1;
    width: 100%;
    height: 12px;
    padding: 0 2px;
    background: #131313;
    color: #e8e8e8;
    font: ${(p) => (p.$bold ? 700 : 400)} 8px/12px ${MONO};
    outline: none;
`

const PlainField = styled(Field)`
    flex: 0 1 179px;
    background: #373737;
`

const ViewRow = styled.div`
    flex: 1;
    display: flex;
    padding-left: 6px;
`

const Viewport = styled.div`
    position: relative;
    flex: 1;
    display: grid;
    place-items: center;
    background: #000;
`

const Quad = styled.div`
    width: 125px;
    height: 125px;
    background: radial-gradient(circle at 92% 8%, #a43616, #a62605 42%, #a51a00 75%);
`

const CameraMenus = styled.div`
    position: absolute;
    top: 3px;
    right: 3px;
    display: flex;
    gap: 4px;
`

const Pill = styled.button`
    padding: 0 4px;
    border: 1px solid #8c8c8c;
    border-radius: 6px;
    font-size: 7px;
    line-height: 10px;
`

const AxisMark = styled.svg`
    position: absolute;
    left: 6px;
    bottom: 6px;
`

const SideBar = styled.div`
    display: flex;
    flex-direction: column;
    width: 17px;
    padding: 0 1px;
    background: #343434;
`

const SideHead = styled.button`
    display: flex;
    justify-content: flex-end;
    height: 7px;
    background: #262626;
`

const SideTools = styled.div`
    display: flex;
    flex-direction: column;
    justify-content: space-between;
    height: 375px;
`

const SideButton = styled.button`
    display: grid;
    place-items: center;
    height: 15px;
    background: ${(p) => (p.$on ? '#50698a' : 'transparent')};
`

const DetailBody = styled.div`
    flex: 1;
    display: flex;
    gap: 5px;
    background: #484848;
`

const DetailTree = styled.div`
    flex: 329 1 0;
    display: flex;
    flex-direction: column;
    background: #2e2e2e;
`

const Table = styled.table`
    width: 100%;
    border-collapse: collapse;
    th {
        height: 15px;
        padding: 0 4px;
        font-size: 7px;
        font-weight: 400;
        text-align: left;
        background: #262626;
    }
    th:first-child { width: 62px; }
    td {
        height: 10px;
        padding: 0;
        background: #58462a;
    }
`

const DetailInfo = styled.div`
    flex: 172 1 0;
    min-width: 0;
    background: #393939;
`

const InfoTabs = styled.div`
    display: flex;
    height: 13px;
    background: #292929;
`

const InfoTab = styled.button`
    flex: none;
    width: ${(p) => p.$w}px;
    font-size: 7px;
    line-height: 13px;
    white-space: nowrap;
    overflow: hidden;
    color: ${(p) => (p.$active ? '#e6e6e6' : '#777')};
    background: ${(p) => (p.$active ? '#393939' : '#303030')};
    border-right: 1px solid #1c1c1c;
`

const Shelves = styled.div`
    display: flex;
    gap: 5px;
    background: #303030;
`

const Shelf = styled.div`
    flex: ${(p) => p.$grow} 1 0;
    padding-left: 4px;
    background: #3a3a3a;
`

const ShelfTools = styled.div`
    display: flex;
    align-items: center;
    height: 13px;
    background: linear-gradient(#434343, #363636);
`

const LinkNumber = styled.button`
    width: 15px;
    height: 15px;
    border: 1px solid #b0b0b0;
    border-radius: 50%;
    line-height: 12px;
    text-align: center;
`

const MenuRow = styled.div`
    display: flex;
    flex: none;
    align-items: center;
    height: 15px;
    padding-left: ${(p) => p.$pad || 6}px;
    background: linear-gradient(#404040, #343434);
    border-bottom: 1px solid #191919;
`

const Canvas = styled.div`
    position: relative;
    flex: 1;
    background: #2f2f2f;
    overflow: hidden;
`

const Wires = styled.svg`
    position: absolute;
    width: 100%;
    height: 100%;
`

const CanvasTitle = styled.div`
    position: absolute;
    top: 7px;
    right: 6px;
    font-size: 14px;
    line-height: 20px;
    font-weight: 700;
    color: #505050;
`

const NodeText = styled.div`
    position: absolute;
    left: ${(p) => p.$x}px;
    top: ${(p) => p.$y}px;
    font-size: 20px;
    line-height: 22px;
    color: #dedede;
    white-space: nowrap;
`

const NodeNumber = styled(NodeText)`
    width: 81px;
    text-align: center;
    color: #111;
`

const Kind = styled.div`
    height: 22px;
    font-size: 18px;
    line-height: 20px;
    color: #666;
`

const Badges = styled.div`
    display: flex;
    align-items: center;
    gap: 8px;
    height: 24px;
    padding-left: 4px;
`

const OutputNote = styled.div`
    font-size: 18px;
    line-height: 20px;
    color: #7fb2ef;
`

const ParamBox = styled(Pane)`
    background: #3a3a3a;
    font-size: 7px;
`

const TitleRow = styled.div`
    display: flex;
    align-items: center;
    height: 16px;
    padding-left: 4px;
    background: #303030;
    border-bottom: 1px solid #262626;
    margin-bottom: 1px;
`

const TitleLabel = styled.label`
    padding: 0 1px;
    font-size: 7px;
    font-weight: 700;
    color: #dcdcdc;
`

const ParamRow = styled.div`
    display: grid;
    grid-template-columns: 88px 1fr;
    column-gap: 8px;
    align-items: center;
    height: 16px;
    label { text-align: right; white-space: nowrap; }
`

const Controls = styled.div`
    display: flex;
    align-items: center;
    padding-right: ${(p) => p.$end || 6}px;
`

const FolderTabs = styled.div`
    display: flex;
    height: 15px;
    padding-left: 2px;
    margin-bottom: 2px;
    border-bottom: 1px solid #474747;
`

const FolderTab = styled.button`
    min-width: ${(p) => p.$w}px;
    line-height: 13px;
    white-space: nowrap;
    font-weight: ${(p) => (p.$active ? 700 : 400)};
    background: ${(p) => (p.$active ? '#484848' : '#333')};
    border-right: 1px solid #292929;
`

const CountField = styled(Field)`
    flex: none;
    width: 26px;
`

const MiniButton = styled.button`
    display: grid;
    place-items: center;
    flex: none;
    width: 11px;
    height: 11px;
    background: #4a4a4a;
    border: 1px solid #2a2a2a;
`

const ClearButton = styled.button`
    width: 37px;
    margin-left: 1px;
    line-height: 12px;
    background: #4a4a4a;
    border-bottom: 1px solid #282828;
`

const MultiRow = styled(ParamRow)`
    grid-template-columns: 126px 1fr;
    column-gap: 9px;
`

const MultiHead = styled.div`
    display: flex;
    align-items: center;
    padding-left: 14px;
`

const Swatch = styled.button`
    flex: none;
    width: 27px;
    height: 12px;
    margin-right: 1px;
    background: #f05000;
`

const Triple = styled.div`
    display: grid;
    flex: 1;
    grid-template-columns: repeat(3, 1fr);
    gap: 3px;
`

const KeyedField = styled(Field)`
    flex: none;
    width: 46px;
    background: #3f8487;
    border-bottom: 1px solid #4e8a2c;
`

const Slider = styled.input`
    appearance: none;
    flex: 1;
    height: 12px;
    margin-left: 3px;
    background: linear-gradient(to right, #1d4f86 ${(p) => p.value * 10}%, #050505 0) center / 100% 2px no-repeat;
    &::-webkit-slider-thumb {
        appearance: none;
        width: 3px;
        height: 12px;
        background: #b9b9b9;
    }
`

const TimelineBar = styled.div`
    display: flex;
    flex: none;
    height: 31px;
    background: #2d2d2d;
    border-top: 1px solid #585858;
    overflow: hidden;
`

const Transport = styled.div`
    width: 145px;
    padding: 4px 0 0 4px;
    border-left: 5px solid #434343;
`

const TransportRow = styled.div`
    display: flex;
    margin-bottom: 4px;
`

const PlayButton = styled.button`
    display: grid;
    place-items: center;
    flex: none;
    width: ${(p) => p.$w || 17}px;
    height: 19px;
    background: ${(p) => (p.$on ? '#607f9f' : '#484848')};
    border: 1px solid #242424;
`

const FrameField = styled(Field)`
    flex: none;
    width: 30px;
    height: 19px;
    margin: 0 1px;
    font: 8px/19px ${UI};
`

const Frames = styled.div`
    flex: 1;
    display: grid;
    grid-template-columns: repeat(168, minmax(0, 1fr));
    padding-top: 6px;
`

const Frame = styled.div`
    position: relative;
    height: 16px;
    background:
        linear-gradient(#777, #777) 0 8px / 100% 1px no-repeat,
        linear-gradient(#777, #777) 0 ${(p) => (p.$major ? '4px / 1px 9px' : '5px / 1px 6px')} no-repeat,
        ${(p) => (p.$keyed ? '#3f7d0a' : 'transparent')};
`

const FrameLabel = styled.span`
    position: absolute;
    top: -7px;
    left: 0;
    font-size: 6px;
    line-height: 10px;
    color: #999;
`

const Playhead = styled.span`
    position: absolute;
    top: -5px;
    left: -8px;
    width: 16px;
    border: 1px solid #ddd;
    background: #000;
    font-size: 8px;
    line-height: 9px;
    text-align: center;
    color: #fff;
    &::after {
        content: '';
        position: absolute;
        top: 100%;
        left: 4px;
        border: 3px solid transparent;
        border-top-color: #ddd;
    }
`

const KeyTools = styled.div`
    display: flex;
    align-items: flex-start;
    width: 155px;
    padding-top: 5px;
`

const KeyButton = styled.button`
    display: grid;
    place-items: center;
    flex: none;
    width: 25px;
    height: 25px;
    margin: 4px 0 0 2px;
    border-radius: 50%;
    border: 1px solid #55807f;
    background: #2c4a4c;
`

const KeyRows = styled.div`
    flex: 1;
    display: grid;
    gap: 4px;
`

const KeyRow = styled.div`
    display: flex;
    gap: 4px;
    padding-right: 4px;
`

const ChannelButton = styled.button`
    flex: 1;
    line-height: 14px;
    font-size: 7px;
    background: #4a4a4a;
    white-space: nowrap;
`

const Banner = styled.h1`
    position: absolute;
    top: 56px;
    left: 0;
    display: flex;
    gap: 15px;
    margin: 0;
    padding: 0 21px 0 53px;
    font-family: "Noto Sans CJK JP", sans-serif;
    font-size: 54px;
    line-height: 76px;
    font-weight: 400;
    color: #fff;
    background: #ff4a12;
`

const BannerLatin = styled.span`
    font-family: "Noto Sans", sans-serif;
    font-size: 64px;
`

const Footer = styled.footer`
    display: grid;
    flex: none;
    grid-template-columns: 661fr auto 714fr;
    align-items: center;
    height: 60px;
    padding: 0 61px 0 57px;
    background: #000;
`

const Logo = styled.svg`
    width: 178px;
    height: 40px;
    text {
        font: 900 20px Lato, sans-serif;
        fill: #fff;
    }
`

const FooterTitle = styled.p`
    margin: 0;
    font-family: "Noto Sans", "Noto Sans CJK JP", sans-serif;
    font-size: 30px;
    line-height: 40px;
    color: #6a6a6a;
`

const PageNumber = styled.div`
    justify-self: end;
    width: 91px;
    font-size: 26px;
    line-height: 60px;
    text-align: center;
    color: #fff;
    background: #f00;
`
